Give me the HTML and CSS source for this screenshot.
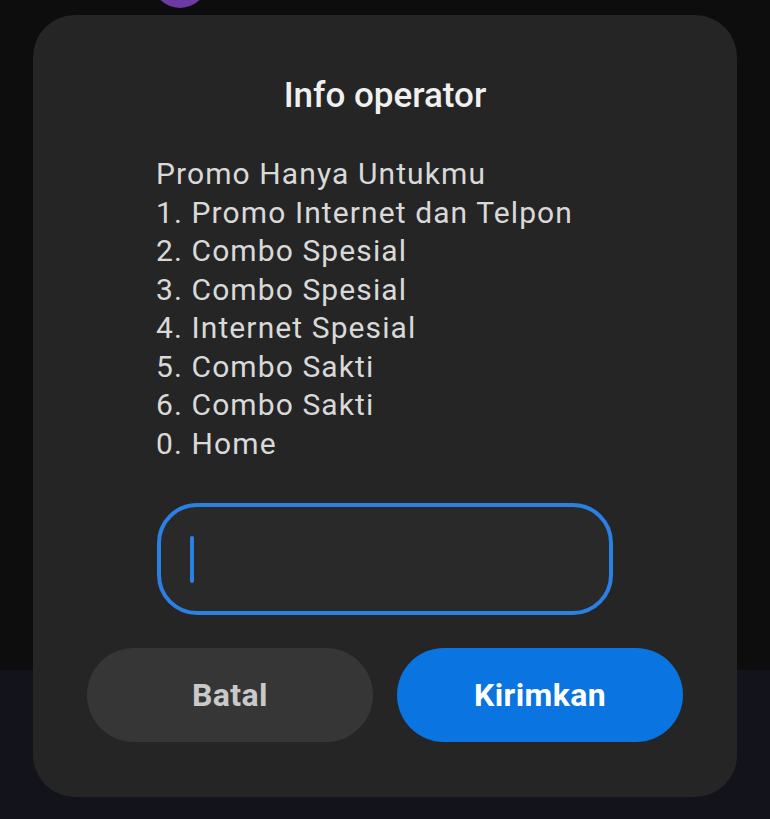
FILE: index.html
```html
<!DOCTYPE html>
<html lang="id">
<head>
<meta charset="utf-8">
<title>Info operator</title>
<link rel="stylesheet" href="styles.css">
</head>
<body>
<div class="screen">
  <div class="top-area">
    <div class="avatar"></div>
  </div>
  <div class="bottom-area"></div>
  <div class="dialog">
    <h1 class="title">Info operator</h1>
    <div class="message">
      <div>Promo Hanya Untukmu</div>
      <div>1. Promo Internet dan Telpon</div>
      <div>2. Combo Spesial</div>
      <div>3. Combo Spesial</div>
      <div>4. Internet Spesial</div>
      <div>5. Combo Sakti</div>
      <div>6. Combo Sakti</div>
      <div>0. Home</div>
    </div>
    <div class="input"><span class="cursor"></span></div>
    <div class="actions">
      <button class="btn btn-cancel">Batal</button>
      <button class="btn btn-send">Kirimkan</button>
    </div>
  </div>
</div>
</body>
</html>
```
FILE: styles.css
```css
html, body {
  margin: 0;
  padding: 0;
  background: #0d0d0d;
}
.screen {
  position: relative;
  width: 770px;
  height: 819px;
  overflow: hidden;
  display: flex;
  flex-direction: column;
  font-family: Roboto, "Noto Sans", sans-serif;
}
.top-area {
  height: 670px;
  background: #0d0d0d;
  position: relative;
}
.avatar {
  position: absolute;
  left: 152px;
  top: -48px;
  width: 56px;
  height: 56px;
  border-radius: 50%;
  background: #6b3aa3;
}
.bottom-area {
  flex: 1;
  background: #13131b;
}
.dialog {
  position: absolute;
  left: 33px;
  top: 15px;
  width: 704px;
  height: 782px;
  box-sizing: border-box;
  border-radius: 42px;
  background: #252525;
  padding: 60px 54px 0;
  display: flex;
  flex-direction: column;
}
.title {
  margin: 0;
  text-align: center;
  font-size: 35px;
  line-height: 42px;
  font-weight: 500;
  color: #f0f0f0;
}
.message {
  margin: 38px 0 0 69px;
  font-size: 30px;
  line-height: 38.5px;
  letter-spacing: 1.1px;
  color: #d9d9d9;
}
.input {
  margin: 40px 0 0 70px;
  width: 456px;
  height: 112px;
  box-sizing: border-box;
  border: 4px solid #2a80e4;
  border-radius: 40px;
  background: #292929;
  display: flex;
  align-items: center;
  padding-left: 29px;
}
.cursor {
  width: 4px;
  height: 47px;
  border-radius: 2px;
  background: #2a80e4;
}
.actions {
  margin-top: 33px;
  display: flex;
  gap: 24px;
}
.btn {
  width: 286px;
  height: 94px;
  border: none;
  border-radius: 47px;
  font-family: Roboto, "Noto Sans", sans-serif;
  font-size: 32px;
  font-weight: 700;
  letter-spacing: 0.4px;
  padding: 0;
}
.btn-cancel {
  background: #363636;
  color: #c9c9c9;
}
.btn-send {
  background: #0a74e0;
  color: #ffffff;
}
```
